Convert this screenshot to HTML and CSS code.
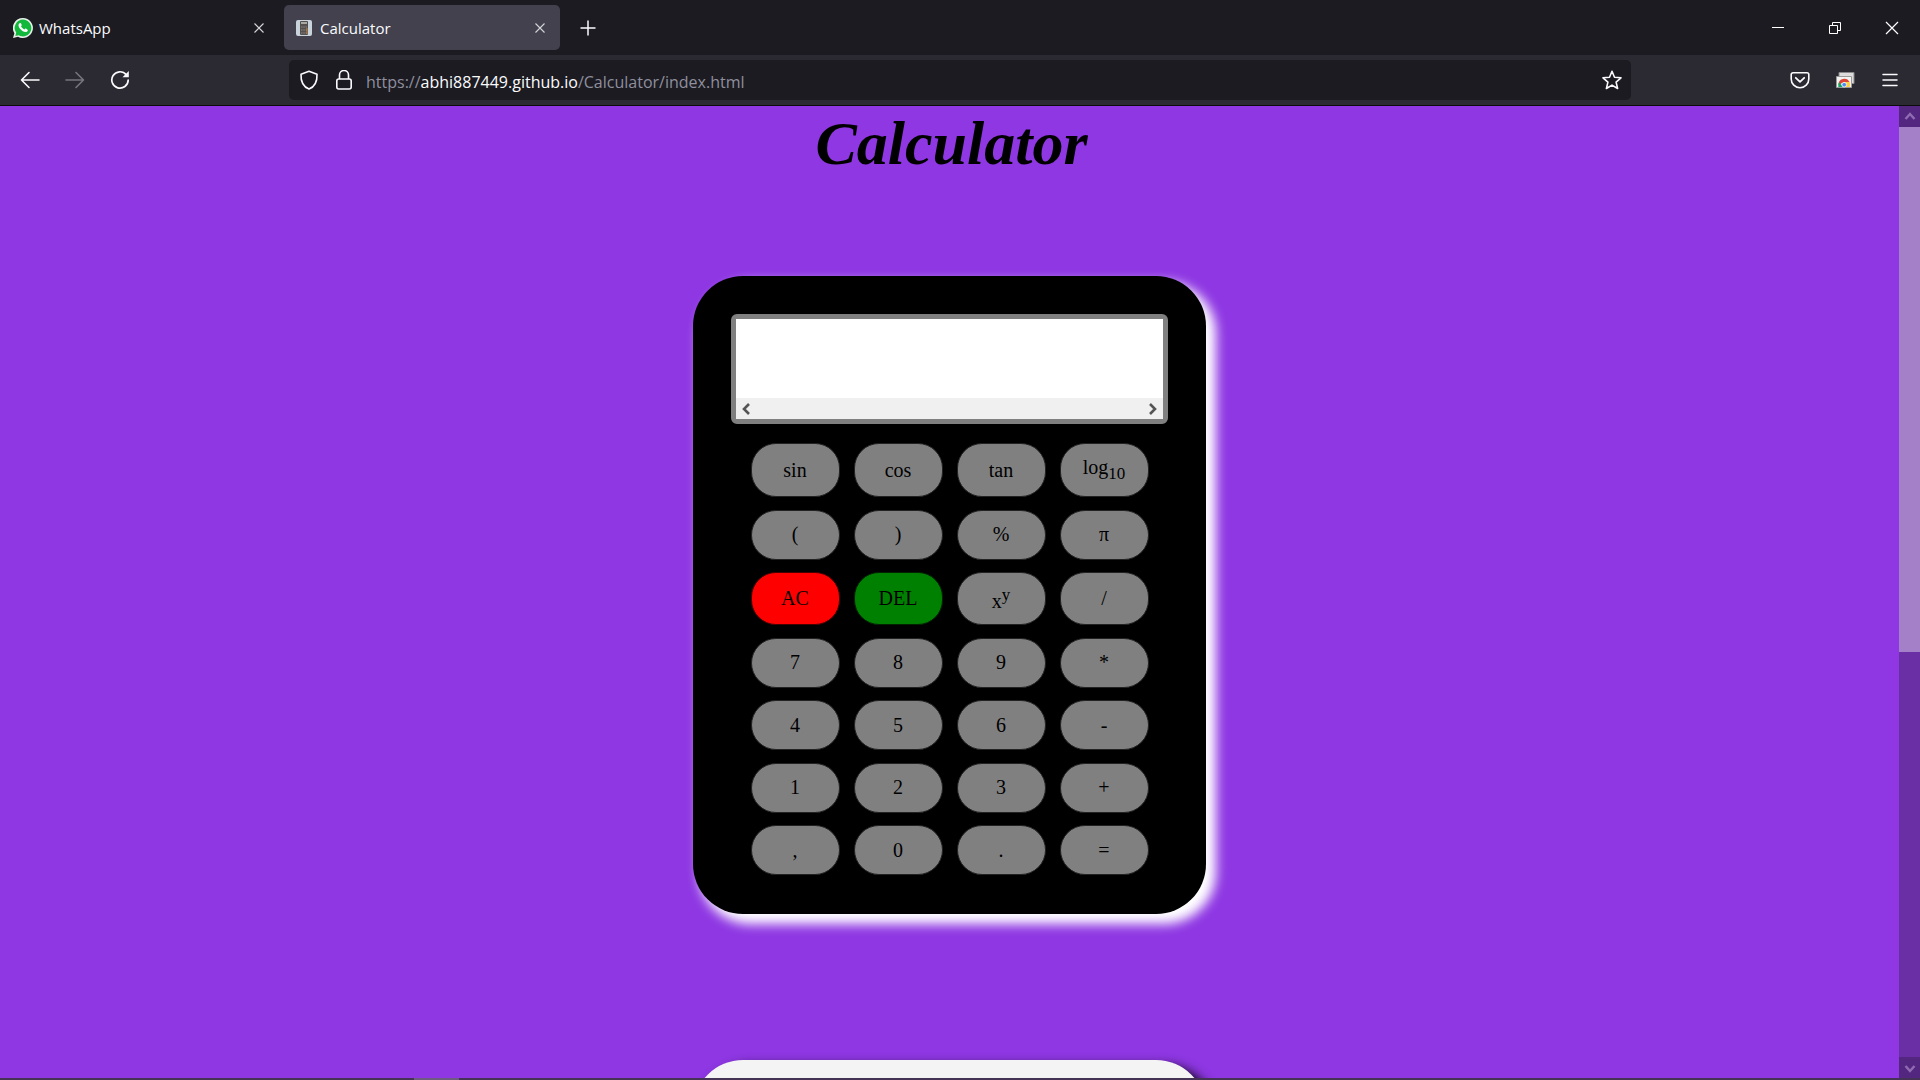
FILE: index.html
```html
<!DOCTYPE html>
<html lang="en">
<head>
<meta charset="utf-8">
<title>Calculator</title>
<link rel="stylesheet" href="styles.css">
</head>
<body>
<div class="window">
  <header class="chrome">
    <div class="tabs">
      <div class="tab">
        <svg class="favicon" width="20" height="20" viewBox="0 0 20 20"><path d="M10 0a10 10 0 1 1-5 18.700L0 20l1.400-4.800A10 10 0 0 1 10 0z" fill="#e8efe9"/><path d="M10 1.600a8.400 8.400 0 1 1-4.400 15.600L2.300 18l.9-3.200A8.400 8.400 0 0 1 10 1.600z" fill="#12b83c"/><path d="M6.600 5.200c.6-.5 1.200-.4 1.500.3l.6 1.400c.2.500-.5 1-.7 1.400.7 1.400 1.800 2.500 3.300 3.200.5-.3.900-1.200 1.500-.9l1.500.8c.9.500.4 1.800-.4 2.300-1.200.7-2.900.2-4.500-.8-1.800-1.200-3.300-2.900-3.800-4.800-.3-1.200.1-2.200 1-2.900z" fill="#fff"/></svg>
        <span class="tab-title">WhatsApp</span>
        <button class="tab-close" aria-label="Close WhatsApp tab"><svg width="10" height="10" viewBox="0 0 10 10"><path d="M.5.5l9 9M9.500.5l-9 9" stroke="#d5d5da" stroke-width="1.100" fill="none"/></svg></button>
      </div>
      <div class="tab tab-active">
        <svg class="favicon" width="20" height="20" viewBox="0 0 20 20"><rect x="2" y="2" width="16" height="16" rx="2" fill="#c9d3dc"/><rect x="6" y="3" width="8" height="14" rx="1" fill="#55504e"/><path d="M7 5h6" stroke="#a9a9a4" stroke-width="2"/><path d="M7 9h6M7 12h6M7 15h6" stroke="#8b8782" stroke-dasharray="1.500 .8"/><path d="M13 10v6" stroke="#c08243"/></svg>
        <span class="tab-title">Calculator</span>
        <button class="tab-close" aria-label="Close Calculator tab"><svg width="10" height="10" viewBox="0 0 10 10"><path d="M.5.5l9 9M9.500.5l-9 9" stroke="#d5d5da" stroke-width="1.100" fill="none"/></svg></button>
      </div>
      <button class="new-tab" aria-label="New tab"><svg width="16" height="16" viewBox="0 0 16 16"><path d="M8 .5v15M.5 8h15" stroke="#fbfbfe" stroke-width="1.500"/></svg></button>
      <div class="window-controls">
        <button aria-label="Minimize"><svg width="12" height="12" viewBox="0 0 12 12"><path d="M0 5.500h12" stroke="#fff"/></svg></button>
        <button aria-label="Restore"><svg width="12" height="12" viewBox="0 0 12 12"><path d="M.5 3.500h8v8h-8zM3.500 3.500v-3h8v8h-3" stroke="#fff" fill="none"/></svg></button>
        <button aria-label="Close"><svg width="14" height="14" viewBox="0 0 14 14"><path d="M1 1l12 12M13 1L1 13" stroke="#fff" stroke-width="1.200" fill="none"/></svg></button>
      </div>
    </div>
    <div class="toolbar">
      <nav class="nav">
        <button aria-label="Back"><svg width="20" height="20" viewBox="0 0 20 20"><path d="M9 2.500L1.500 10 9 17.500M1.500 10H19" stroke="#fbfbfe" stroke-width="1.600" fill="none" stroke-linecap="round" stroke-linejoin="round"/></svg></button>
        <button aria-label="Forward"><svg width="20" height="20" viewBox="0 0 20 20"><path d="M11 2.500l7.500 7.500-7.500 7.500M18.500 10H1" stroke="#77767d" stroke-width="1.600" fill="none" stroke-linecap="round" stroke-linejoin="round"/></svg></button>
        <button aria-label="Reload"><svg width="20" height="20" viewBox="0 0 20 20"><path d="M16.200 4.600A8.200 8.200 0 1 0 18.200 10" stroke="#fbfbfe" stroke-width="1.700" fill="none" stroke-linecap="round"/><path d="M18.800 1v6.300h-6.300z" fill="#fbfbfe"/></svg></button>
      </nav>
      <div class="address">
        <svg width="20" height="20" viewBox="0 0 20 20"><path d="M10 1.200l8 3c.3 6.800-1.600 12.200-8 14.900C3.600 16.400 1.700 11 2 4.200z" stroke="#fbfbfe" stroke-width="1.600" fill="none" stroke-linejoin="round"/></svg>
        <svg width="20" height="20" viewBox="0 0 20 20"><rect x="2.800" y="9" width="14.400" height="10" rx="2" stroke="#fbfbfe" stroke-width="1.600" fill="none"/><path d="M5.500 9V5a4.500 4.500 0 0 1 9 0v4" stroke="#fbfbfe" stroke-width="1.600" fill="none"/></svg>
        <a class="url" href="#">https://<span class="host">abhi887449.github.io</span>/Calculator/index.html</a>
        <button aria-label="Bookmark this page"><svg width="20" height="20" viewBox="0 0 20 20"><path d="M10 1.300l2.500 5.900 6.500.6-4.900 4.300 1.500 6.400L10 15.100l-5.600 3.400 1.500-6.400L1 7.800l6.500-.6z" stroke="#fbfbfe" stroke-width="1.600" fill="none" stroke-linejoin="round"/></svg></button>
      </div>
      <div class="actions">
        <button aria-label="Save to Pocket"><svg width="20" height="20" viewBox="0 0 20 20"><path d="M3 2.800h14a1.800 1.800 0 0 1 1.800 1.800v4.300a8.800 8.800 0 0 1-17.600 0V4.600A1.800 1.800 0 0 1 3 2.800z" stroke="#fbfbfe" stroke-width="1.600" fill="none"/><path d="M5.800 7.800l4.200 4 4.200-4" stroke="#fbfbfe" stroke-width="1.800" fill="none" stroke-linecap="round" stroke-linejoin="round"/></svg></button>
        <button aria-label="Extension"><svg width="20" height="20" viewBox="0 0 20 20"><path d="M4 2.500h15v11H4z" fill="#dcdcdc" stroke="#8a8a8a"/><path d="M1.500 6.500h15v11h-15z" fill="#f2f2f0" stroke="#9a9a9a"/><path d="M3.500 15a5.800 5.800 0 0 1 11-3H9z" fill="#dd4436"/><path d="M3.300 17a6 6 0 0 1 1-5L8 17z" fill="#1ba261"/><path d="M14.500 12a6 6 0 0 1 .2 5H10v-5z" fill="#ffcd40"/><circle cx="9.200" cy="14.700" r="2.300" fill="#4c8bf5" stroke="#fff" stroke-width=".7"/></svg></button>
        <button aria-label="Open application menu"><svg width="20" height="20" viewBox="0 0 20 20"><path d="M3 4.500h14M3 10h14M3 15.500h14" stroke="#fbfbfe" stroke-width="1.500" stroke-linecap="round"/></svg></button>
      </div>
    </div>
  </header>
  <div class="viewport">
    <main class="page">
      <h1 class="title">Calculator</h1>
      <section class="calculator">
        <div class="screen">
          <input class="result" type="text" aria-label="Result">
          <div class="screen-scroll">
            <svg width="10" height="12" viewBox="0 0 10 12"><path d="M8 1L3 6l5 5" stroke="#555" stroke-width="2.600" fill="none"/></svg>
            <svg width="10" height="12" viewBox="0 0 10 12"><path d="M2 1l5 5-5 5" stroke="#555" stroke-width="2.600" fill="none"/></svg>
          </div>
        </div>
        <div class="keys">
          <button class="key">sin</button><button class="key">cos</button><button class="key">tan</button><button class="key">log<sub>10</sub></button>
          <button class="key">(</button><button class="key">)</button><button class="key">%</button><button class="key">π</button>
          <button class="key key-clear">AC</button><button class="key key-delete">DEL</button><button class="key">x<sup>y</sup></button><button class="key">/</button>
          <button class="key">7</button><button class="key">8</button><button class="key">9</button><button class="key">*</button>
          <button class="key">4</button><button class="key">5</button><button class="key">6</button><button class="key">-</button>
          <button class="key">1</button><button class="key">2</button><button class="key">3</button><button class="key">+</button>
          <button class="key">,</button><button class="key">0</button><button class="key">.</button><button class="key">=</button>
        </div>
      </section>
      <section class="card"></section>
    </main>
    <div class="scrollbar">
      <div class="scroll-button"><svg width="12" height="12" viewBox="0 0 12 12"><path d="M1.500 8L6 3l4.500 5" stroke="#8f6bb3" stroke-width="2.500" fill="none"/></svg></div>
      <div class="scroll-track"><div class="scroll-thumb"></div></div>
      <div class="scroll-button"><svg width="12" height="12" viewBox="0 0 12 12"><path d="M1.500 4L6 9l4.500-5" stroke="#8f6bb3" stroke-width="2.500" fill="none"/></svg></div>
    </div>
  </div>
  <footer class="taskbar"><div class="task-active"></div></footer>
</div>
</body>
</html>
```
FILE: styles.css
```css
* { box-sizing: border-box; }

body { margin: 0; }

button {
  border: 0;
  padding: 0;
  background: none;
  color: inherit;
  font: inherit;
}

svg { display: block; flex: none; }

.window {
  display: flex;
  flex-direction: column;
  height: 100vh;
  overflow: hidden;
}

/* Browser frame */
.chrome {
  flex: none;
  background: #2b2a33;
  border-bottom: 1px solid #0c0c0d;
  color: #fbfbfe;
  font-family: "Open Sans", "Noto Sans", sans-serif;
}

.tabs {
  display: flex;
  align-items: center;
  height: 55px;
  background: #1c1b22;
}

.tab {
  display: flex;
  align-items: center;
  width: 284px;
  height: 45px;
  padding: 0 15px 0 13px;
  font-size: 15px;
}

.tab-active {
  width: 276px;
  padding: 0 15px 0 10px;
  border-radius: 5px;
  background: #42414d;
}

.tab-title { flex: 1; margin-left: 6px; }

.tab-close { padding-right: 5px; }

.tab-active .tab-close { padding-right: 0; }

.new-tab { margin-left: 20px; }

.window-controls { display: flex; margin-left: auto; }

.window-controls button {
  display: grid;
  place-items: center;
  width: 57px;
  height: 50px;
}

.toolbar {
  display: flex;
  align-items: center;
  height: 50px;
}

.nav {
  display: flex;
  gap: 25px;
  width: 289px;
  padding-left: 20px;
}

.address {
  display: flex;
  flex: 1;
  align-items: center;
  gap: 15px;
  height: 40px;
  padding: 0 9px 0 10px;
  border-radius: 5px;
  background: #1c1b22;
}

.url {
  flex: 1;
  margin-left: -3px;
  padding-top: 4px;
  color: #8f8f9d;
  font-size: 16px;
  text-decoration: none;
}

.host { color: #fbfbfe; }

.actions {
  display: flex;
  gap: 25px;
  width: 289px;
  padding-right: 20px;
  justify-content: flex-end;
}

/* Page */
.viewport {
  display: flex;
  flex: 1;
  min-height: 0;
  background: #8e37e3;
}

.page {
  flex: 1;
  overflow: hidden;
  font-family: "Liberation Serif", "Times New Roman", serif;
}

.title {
  margin: 0 0 96px;
  padding-left: 4px;
  font-size: 62px;
  font-style: italic;
  line-height: 74px;
  text-align: center;
}

.calculator {
  width: 513px;
  margin: 0 auto;
  padding: 38px;
  border-radius: 50px;
  background: #000;
  box-shadow: 8px 8px 12px 2px #fff;
}

.screen {
  display: flex;
  flex-direction: column;
  height: 110px;
  border: 5px solid #808080;
  border-radius: 6px;
  background: #fff;
}

.result {
  flex: 1;
  width: 100%;
  min-height: 0;
  padding: 0 10px;
  border: 0;
  outline: 0;
  background: #fff;
  font: 30px "Liberation Serif", serif;
}

.screen-scroll {
  display: flex;
  align-items: center;
  justify-content: space-between;
  height: 21px;
  padding: 0 5px;
  background: #f0f0f0;
}

.keys {
  display: grid;
  grid-template-columns: repeat(4, 89px);
  grid-template-rows: 54px 50px 53px repeat(4, 50px);
  align-content: space-between;
  justify-content: center;
  column-gap: 14px;
  height: 432px;
  margin: 19px 0 1px;
}

.key {
  border: 1px solid #222;
  border-radius: 25px;
  background: #808080;
  color: #000;
  font-size: 20px;
  line-height: 23px;
}

.key-clear { background: #f00; border-color: #400; }

.key-delete { background: #008000; border-color: #020; }

.key sub, .key sup { font-size: 17px; line-height: 20px; }

.card {
  width: 513px;
  height: 300px;
  margin: 146px auto 0;
  border-radius: 50px;
  background: #f4f4f4;
  box-shadow: 8px 8px 12px 2px #000;
}

.scrollbar {
  display: flex;
  flex-direction: column;
  width: 21px;
  background: #6a2ea5;
}

.scroll-button {
  display: grid;
  place-items: center;
  height: 21px;
  background: #53267f;
}

.scroll-track { flex: 1; }

.scroll-thumb { height: 56.4%; background: #a480c8; }

.taskbar {
  flex: none;
  height: 2px;
  padding-left: 414px;
  background: #443355;
}

.task-active { width: 45px; height: 2px; background: #6d5b80; }
```
